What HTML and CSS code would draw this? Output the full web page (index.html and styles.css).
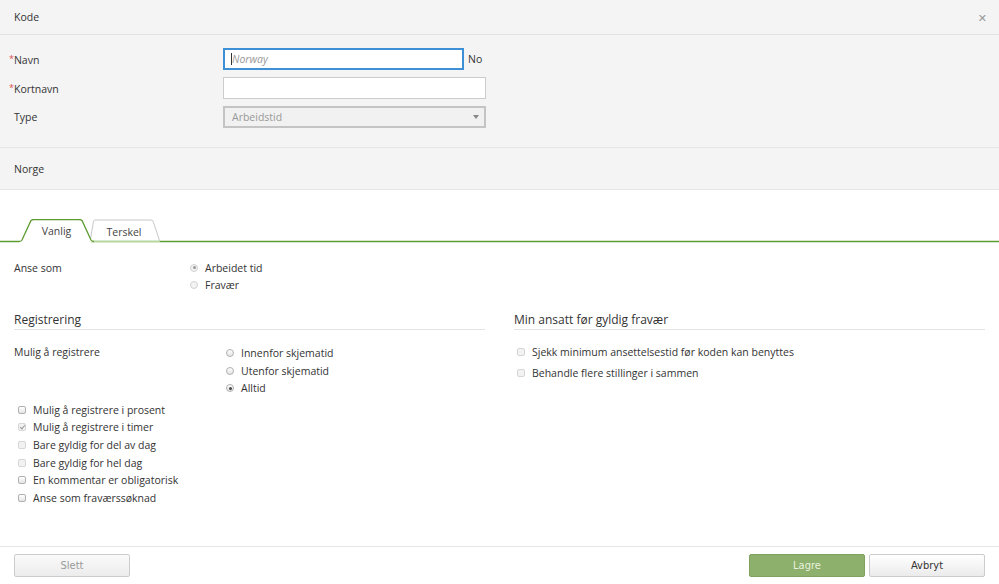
FILE: index.html
```html
<!DOCTYPE html>
<html lang="no">
<head>
    <meta charset="UTF-8">
    <title>Kode</title>
    <link rel="stylesheet" href="styles.css">
</head>
<body>
    <div class="dialog">
        <header class="head">
            <span>Kode</span>
            <span class="close">&#x2715;</span>
        </header>

        <section class="basics">
            <div class="frow">
                <label class="flabel"><i>*</i>Navn</label>
                <div class="input focus"><span class="caret"></span><em>Norway</em></div>
                <span class="lang">No</span>
            </div>
            <div class="frow">
                <label class="flabel"><i>*</i>Kortnavn</label>
                <div class="input wide"></div>
            </div>
            <div class="frow">
                <label class="flabel plain">Type</label>
                <div class="input wide select">Arbeidstid<span class="arrow"></span></div>
            </div>
        </section>

        <section class="country">Norge</section>

        <div class="tabs">
            <svg class="tabshape" width="999" height="24" viewBox="0 0 999 24">
                <path d="M90 23 L93.5 2 Q94 1 96 1 L150 1 Q152 1 153 2 L160 23" fill="#fff" stroke="#c9c9c9" stroke-width="1"/>
                <path d="M91 22.5 L160 22.5" stroke="#b5d69d" stroke-width="2"/>
                <path d="M0 22.5 L19 22.5 Q21 22.5 22 21 L31 1.5 Q32 0.5 34 0.5 L79 0.5 Q81 0.5 82 1.5 L91 21 Q92 22.5 94 22.5" fill="#fff" stroke="#5d9b2e" stroke-width="1.3"/>
                <path d="M160 22.5 L999 22.5" stroke="#5d9b2e" stroke-width="1.3"/>
            </svg>
            <span class="tab active">Vanlig</span>
            <span class="tab">Terskel</span>
        </div>

        <div class="row anse">
            <span class="rlabel">Anse som</span>
            <div class="opts">
                <span class="opt"><b class="radio dim on"></b>Arbeidet tid</span>
                <span class="opt"><b class="radio dim"></b>Fravær</span>
            </div>
        </div>

        <div class="cols">
            <div class="col">
                <h3 class="sect">Registrering</h3>
                <div class="row reg">
                    <span class="rlabel">Mulig å registrere</span>
                    <div class="opts">
                        <span class="opt"><b class="radio"></b>Innenfor skjematid</span>
                        <span class="opt"><b class="radio"></b>Utenfor skjematid</span>
                        <span class="opt"><b class="radio on"></b>Alltid</span>
                    </div>
                </div>
                <div class="checks">
                    <span class="opt"><b class="check"></b>Mulig å registrere i prosent</span>
                    <span class="opt"><b class="check dim on"></b>Mulig å registrere i timer</span>
                    <span class="opt"><b class="check dim"></b>Bare gyldig for del av dag</span>
                    <span class="opt"><b class="check dim"></b>Bare gyldig for hel dag</span>
                    <span class="opt"><b class="check"></b>En kommentar er obligatorisk</span>
                    <span class="opt"><b class="check"></b>Anse som fraværssøknad</span>
                </div>
            </div>
            <div class="col">
                <h3 class="sect">Min ansatt før gyldig fravær</h3>
                <div class="checks right">
                    <span class="opt"><b class="check dim"></b>Sjekk minimum ansettelsestid før koden kan benyttes</span>
                    <span class="opt"><b class="check dim"></b>Behandle flere stillinger i sammen</span>
                </div>
            </div>
        </div>

        <footer class="foot">
            <button class="btn">Slett</button>
            <span class="spacer"></span>
            <button class="btn save">Lagre</button>
            <button class="btn cancel">Avbryt</button>
        </footer>
    </div>
</body>
</html>
```

FILE: styles.css
```css
* {
    box-sizing: border-box;
}

body {
    margin: 0;
    font-family: "Open Sans", "DejaVu Sans", sans-serif;
    font-size: 10px;
    color: #333;
    background-color: #fff;
}

.dialog {
    width: 999px;
    height: 584px;
    display: flex;
    flex-direction: column;
}

.head {
    height: 35px;
    display: flex;
    align-items: center;
    justify-content: space-between;
    padding: 0 12px 0 14px;
    background-color: #f4f4f4;
    border-bottom: 1px solid #e2e2e2;
    font-size: 10.5px;
}

.close {
    color: #999;
    font-size: 11px;
}

.basics {
    background-color: #f4f4f4;
    padding: 13px 0 19px;
    border-bottom: 1px solid #e6e6e6;
}

.frow {
    display: flex;
    align-items: center;
    height: 22px;
    margin-bottom: 7px;
}

.frow:last-child {
    margin-bottom: 0;
}

.flabel {
    width: 223px;
    padding-left: 9px;
    font-size: 10.5px;
}

.flabel i {
    font-style: normal;
    color: #d9534f;
    font-size: 9px;
    vertical-align: 2px;
}

.flabel.plain {
    padding-left: 14px;
}

.input {
    position: relative;
    width: 241px;
    height: 22px;
    background-color: #fff;
    border: 1px solid #ccc;
    padding: 0 7px;
    line-height: 20px;
    color: #aaa;
}

.input.focus {
    border: 2px solid #3d8fd6;
    line-height: 18px;
    padding-left: 6px;
    font-size: 10.5px;
}

.input em {
    color: #999;
}

.caret {
    display: inline-block;
    width: 1px;
    height: 12px;
    background-color: #333;
    vertical-align: -2px;
}

.input.wide {
    width: 263px;
}

.select {
    background-color: #f1f1f1;
    border: 2px solid #c4c4c4;
    line-height: 18px;
    color: #999;
    font-size: 10.5px;
}

.arrow {
    position: absolute;
    right: 5px;
    top: 7px;
    border-left: 3px solid transparent;
    border-right: 3px solid transparent;
    border-top: 4px solid #888;
}

.lang {
    margin-left: 4px;
    font-size: 10.5px;
}

.country {
    height: 42px;
    display: flex;
    align-items: center;
    padding-left: 14px;
    background-color: #f4f4f4;
    border-bottom: 1px solid #e6e6e6;
    font-size: 10.5px;
}

.tabs {
    position: relative;
    display: flex;
    height: 24px;
    margin-top: 29px;
    padding-left: 34px;
}

.tabshape {
    position: absolute;
    left: 0;
    top: 0;
}

.tab {
    position: relative;
    width: 45px;
    text-align: center;
    line-height: 24px;
    font-size: 10.5px;
    color: #444;
}

.tab.active {
    margin-right: 22px;
}

.tab + .tab {
    width: 46px;
    line-height: 26px;
}

.row {
    display: flex;
}

.rlabel {
    font-size: 10.5px;
}

.anse {
    padding: 16px 0 0 14px;
}

.anse .rlabel {
    width: 176px;
    padding-top: 2px;
}

.opts {
    display: flex;
    flex-direction: column;
}

.opt {
    display: flex;
    align-items: center;
    height: 17.6px;
    font-size: 10.5px;
    color: #333;
}

.radio,
.check {
    display: inline-block;
    width: 8px;
    height: 8px;
    margin-right: 7px;
    border: 1px solid #b0b0b0;
    background: linear-gradient(#fff, #e4e4e4);
    position: relative;
}

.radio {
    border-radius: 50%;
}

.radio.on::after {
    content: "";
    position: absolute;
    left: 1.5px;
    top: 1.5px;
    width: 3px;
    height: 3px;
    border-radius: 50%;
    background-color: #444;
}

.radio.dim {
    border-color: #d2d2d2;
    background: #f3f3f3;
}

.radio.dim.on::after {
    background-color: #999;
}

.check {
    border-radius: 2px;
}

.check.dim {
    border-color: #d6d6d6;
    background: #f2f2f2;
}

.check.on::after {
    content: "";
    position: absolute;
    left: 2px;
    top: 0;
    width: 2px;
    height: 4px;
    border-right: 1px solid #999;
    border-bottom: 1px solid #999;
    transform: rotate(40deg);
}

.cols {
    display: flex;
    gap: 29px;
    padding: 18px 14px 0;
}

.col {
    flex: 1;
}

.sect {
    margin: 0;
    font-weight: normal;
    font-size: 12px;
    line-height: 16px;
    color: #333;
    padding-bottom: 1px;
    border-bottom: 1px solid #e3e3e3;
}

.reg {
    padding-top: 14px;
}

.reg .rlabel {
    width: 212px;
    padding-top: 1px;
}

.checks {
    display: flex;
    flex-direction: column;
    padding: 4px 0 0 4px;
}

.checks.right {
    padding-top: 12px;
    padding-left: 3px;
}

.checks.right .opt {
    height: 20.5px;
}

.foot {
    margin-top: auto;
    height: 38px;
    display: flex;
    align-items: center;
    gap: 4px;
    padding: 0 14px 1px;
    border-top: 1px solid #e6e6e6;
}

.spacer {
    flex: 1;
}

.btn {
    width: 116px;
    height: 23px;
    border: 1px solid #ccc;
    border-radius: 2px;
    background: linear-gradient(#fafafa, #ececec);
    font-family: "Liberation Sans Narrow", "DejaVu Sans Condensed", sans-serif;
    font-size: 11px;
    color: #999;
}

.btn.save {
    background: #8db06c;
    border-color: #7fa35f;
    color: #e8f1df;
}

.btn.cancel {
    background: linear-gradient(#fff, #ebebeb);
    color: #333;
}
```
